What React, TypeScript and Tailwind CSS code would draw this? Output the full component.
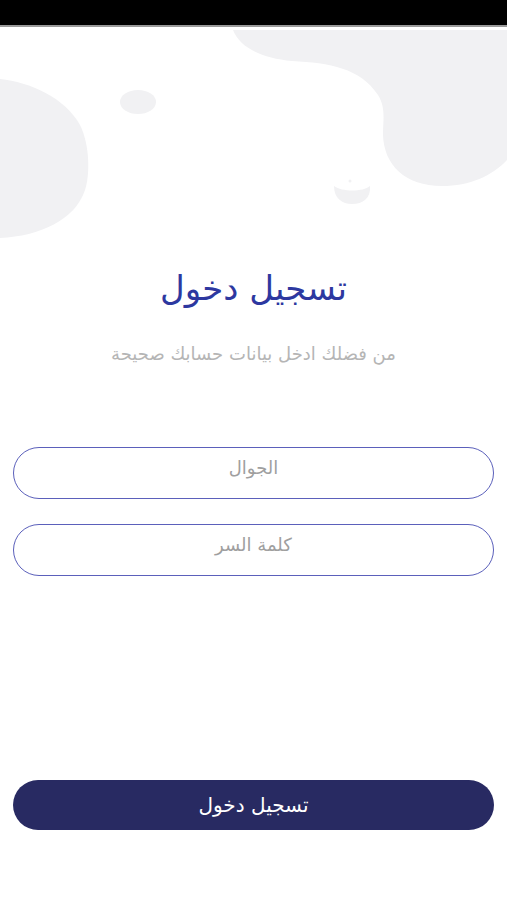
import React from 'react';

const Blobs = () => (
  <svg
    className="absolute left-0 top-0 pointer-events-none"
    width="507"
    height="260"
    viewBox="0 0 507 260"
  >
    <path
      d="M233 30 C240 48 262 58 292 61 C330 63 360 68 378 95 C386 108 383 120 383 135 C384 165 405 186 442 186 C470 186 492 176 507 160 L507 30 Z"
      fill="#f1f1f3"
    />
    <path
      d="M0 79 C30 82 65 98 80 125 C90 145 90 175 85 190 C75 220 40 236 0 238 Z"
      fill="#f1f1f3"
    />
    <ellipse cx="138" cy="102" rx="18" ry="12" fill="#f1f1f3" />
    <path
      d="M334 186 C334 198 342 204 352 204 C363 204 371 198 370 186 C363 192 342 192 334 186 Z"
      fill="#f1f1f3"
    />
    <circle cx="350" cy="181" r="1.5" fill="#f1f1f3" />
  </svg>
);

const Field = ({ placeholder }: { placeholder: string }) => (
  <div className="h-[52px] rounded-full border-[1.5px] border-[#5b60bb] flex items-start justify-center pt-[6px]">
    <span className="text-[18px] text-[#9f9f9f]">{placeholder}</span>
  </div>
);

export default function App() {
  return (
    <div
      dir="rtl"
      className="relative w-[507px] h-[900px] bg-white overflow-hidden flex flex-col"
      style={{ fontFamily: '"DejaVu Sans", "Noto Sans", sans-serif' }}
    >
      <div className="h-[25px] bg-black shrink-0" />
      <div className="h-[2px] bg-[#9a9a9a] shrink-0" />
      <Blobs />

      <div className="relative flex flex-col items-center pt-[237px]">
        <h1 className="text-[34px] leading-[48px] text-[#2d38a0]">تسجيل دخول</h1>
        <p className="mt-[28px] text-[18px] text-[#b5b5b5]">من فضلك ادخل بيانات حسابك صحيحة</p>
      </div>

      <div className="relative flex flex-col gap-[25px] px-[13px] mt-[80px]">
        <Field placeholder="الجوال" />
        <Field placeholder="كلمة السر" />
      </div>

      <div className="relative px-[13px] mt-auto mb-[70px]">
        <button className="w-full h-[50px] rounded-full bg-[#282a62] text-white text-[20px]">
          تسجيل دخول
        </button>
      </div>
    </div>
  );
}
